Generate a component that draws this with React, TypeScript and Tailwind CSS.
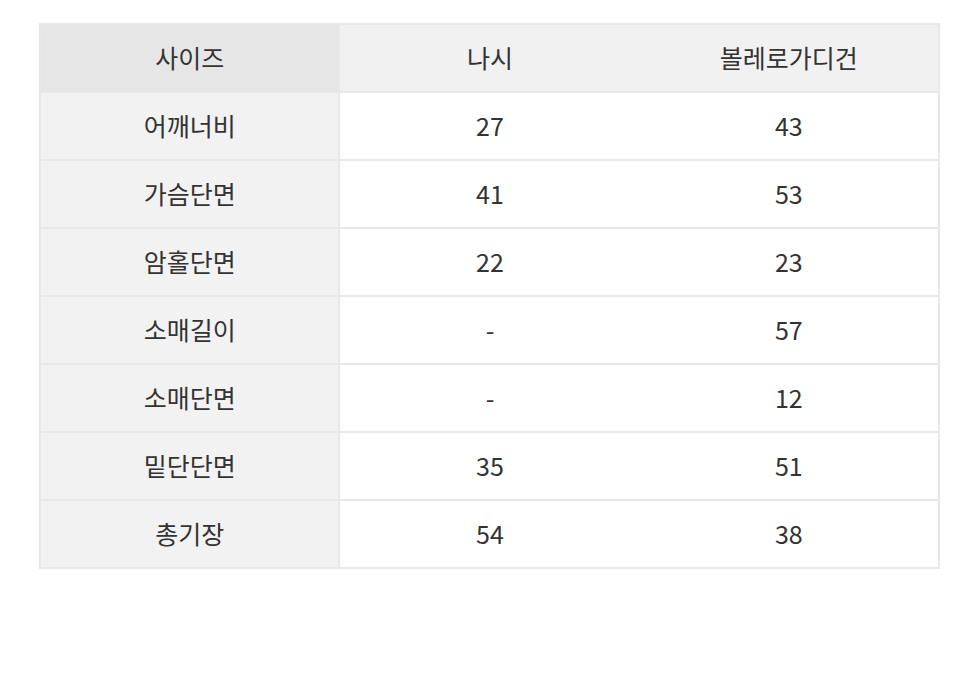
import React from "react";

const rows: [string, string, string][] = [
  ["어깨너비", "27", "43"],
  ["가슴단면", "41", "53"],
  ["암홀단면", "22", "23"],
  ["소매길이", "-", "57"],
  ["소매단면", "-", "12"],
  ["밑단단면", "35", "51"],
  ["총기장", "54", "38"],
];

export default function App() {
  return (
    <div
      className="w-[980px] h-[683px] bg-white pt-[23px] pl-[39px]"
      style={{ fontFamily: '"Noto Sans CJK KR", "Noto Sans", sans-serif' }}
    >
      <table className="w-[901px] border-collapse border-2 border-[#e8e8e8] text-[25px] leading-none text-[#333]">
        <thead>
          <tr className="h-[68px]">
            <th className="w-[300px] border-2 border-[#e8e8e8] bg-[#e6e6e6] font-normal pb-[2px]">사이즈</th>
            <th className="w-[301px] border-y-2 border-[#e8e8e8] bg-[#f1f1f1] font-normal pb-[2px]">나시</th>
            <th className="w-[300px] border-y-2 border-[#e8e8e8] bg-[#f1f1f1] font-normal pb-[2px]">볼레로가디건</th>
          </tr>
        </thead>
        <tbody>
          {rows.map((r) => (
            <tr key={r[0]} className="h-[68px]">
              <td className="border-2 border-[#e8e8e8] bg-[#f2f2f2] text-center pb-[2px]">{r[0]}</td>
              <td className="border-y-2 border-[#e8e8e8] bg-white text-center pb-[2px]">{r[1]}</td>
              <td className="border-y-2 border-[#e8e8e8] bg-white text-center pb-[2px]">{r[2]}</td>
            </tr>
          ))}
        </tbody>
      </table>
    </div>
  );
}
